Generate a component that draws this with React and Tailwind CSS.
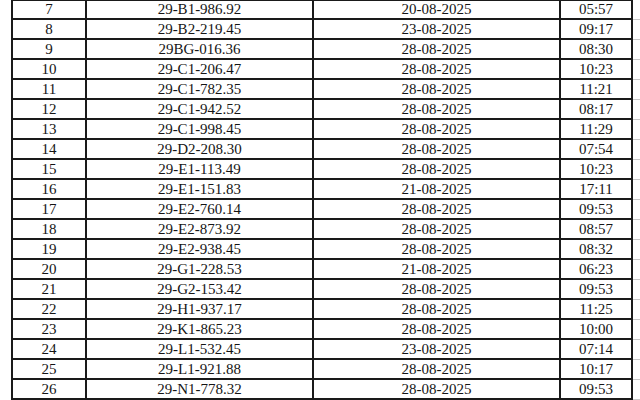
import React from "react";

const rows = [
  ["7", "29-B1-986.92", "20-08-2025", "05:57"],
  ["8", "29-B2-219.45", "23-08-2025", "09:17"],
  ["9", "29BG-016.36", "28-08-2025", "08:30"],
  ["10", "29-C1-206.47", "28-08-2025", "10:23"],
  ["11", "29-C1-782.35", "28-08-2025", "11:21"],
  ["12", "29-C1-942.52", "28-08-2025", "08:17"],
  ["13", "29-C1-998.45", "28-08-2025", "11:29"],
  ["14", "29-D2-208.30", "28-08-2025", "07:54"],
  ["15", "29-E1-113.49", "28-08-2025", "10:23"],
  ["16", "29-E1-151.83", "21-08-2025", "17:11"],
  ["17", "29-E2-760.14", "28-08-2025", "09:53"],
  ["18", "29-E2-873.92", "28-08-2025", "08:57"],
  ["19", "29-E2-938.45", "28-08-2025", "08:32"],
  ["20", "29-G1-228.53", "21-08-2025", "06:23"],
  ["21", "29-G2-153.42", "28-08-2025", "09:53"],
  ["22", "29-H1-937.17", "28-08-2025", "11:25"],
  ["23", "29-K1-865.23", "28-08-2025", "10:00"],
  ["24", "29-L1-532.45", "23-08-2025", "07:14"],
  ["25", "29-L1-921.88", "28-08-2025", "10:17"],
  ["26", "29-N1-778.32", "28-08-2025", "09:53"],
];

export default function App() {
  return (
    <div
      className="w-[640px] h-[400px] overflow-hidden bg-white text-[#151515]"
      style={{ fontFamily: '"Liberation Serif", "Times New Roman", serif' }}
    >
      {rows.map((r, i) => (
        <div key={i} className="flex h-[20px]">
          <div className="w-[11px] shrink-0" />
          <div
            className={
              i === 0
                ? "flex w-[622px] shrink-0 border-t border-b-2 border-x-2 border-[#1a1a1a] text-[15px] leading-[17px]"
                : "flex w-[622px] shrink-0 border-b-2 border-x-2 border-[#1a1a1a] text-[15px] leading-[17px]"
            }
          >
            <div className="w-[72px] shrink-0 flex items-center justify-center">{r[0]}</div>
            <div className="w-[227px] shrink-0 border-l-2 border-[#1a1a1a] flex items-center justify-center">{r[1]}</div>
            <div className="w-[247px] shrink-0 border-l-2 border-[#1a1a1a] flex items-center justify-center">{r[2]}</div>
            <div className="flex-1 border-l-2 border-[#1a1a1a] flex items-center justify-center">{r[3]}</div>
          </div>
          <div className="flex-1 border-b border-[#c8c8c8]" />
        </div>
      ))}
    </div>
  );
}
